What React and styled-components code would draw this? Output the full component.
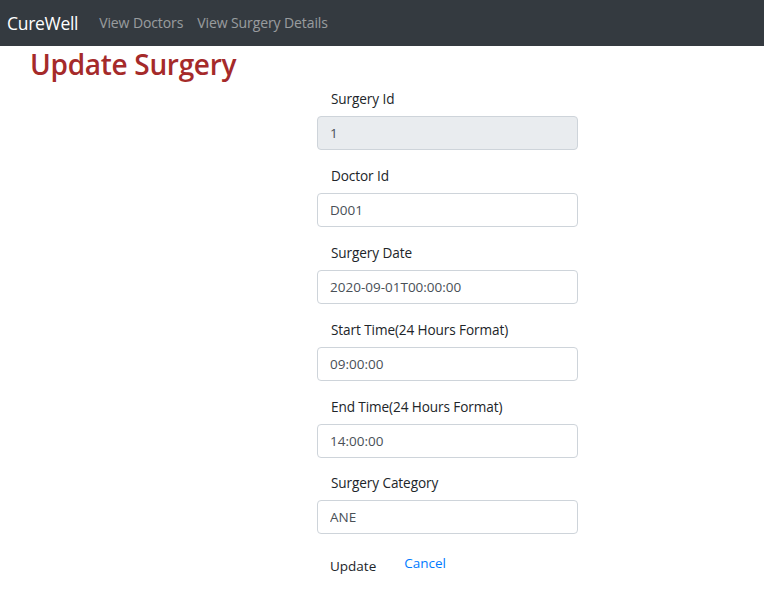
import React from "react";
import styled, { createGlobalStyle } from "styled-components";

const Global = createGlobalStyle`
  html, body { margin: 0; padding: 0; background: #fff; }
  body { font-family: "Open Sans", "Noto Sans", Arial, sans-serif; color: #212529; }
  * { box-sizing: border-box; }
`;

const Nav = styled.nav`
  height: 46px;
  background: #343a40;
  display: flex;
  align-items: center;
  padding: 0 7px 1px;
  gap: 21px;
`;

const Brand = styled.a`
  color: #fff;
  font-size: 17.5px;
  letter-spacing: -0.3px;
  text-decoration: none;
`;

const Links = styled.div`
  display: flex;
  gap: 14px;
`;

const NavLink = styled.a`
  color: rgba(255, 255, 255, 0.5);
  font-size: 14px;
  letter-spacing: -0.1px;
  text-decoration: none;
`;

const Title = styled.h1`
  margin: 0 0 0 30px;
  font-size: 28px;
  line-height: 37px;
  font-weight: 600;
  color: #a52a2a;
  letter-spacing: -0.3px;
`;

const Form = styled.form`
  margin-left: 317px;
  margin-top: 6px;
  width: 261px;
  display: flex;
  flex-direction: column;
`;

const Group = styled.div`
  display: flex;
  flex-direction: column;
  margin-bottom: ${(p) => (p.$last ? 0 : 15.9)}px;
`;

const Label = styled.label`
  padding-left: 14px;
  font-size: 13.6px;
  line-height: 20px;
  margin-bottom: 7px;
  letter-spacing: -0.1px;
`;

const Input = styled.input`
  height: 34px;
  width: 100%;
  border: 1px solid #ced4da;
  border-radius: 4px;
  padding: 0 12px;
  font-family: inherit;
  font-size: 13.5px;
  color: #495057;
  background: ${(p) => (p.readOnly ? "#e9ecef" : "#fff")};
  outline: none;
`;

const Actions = styled.div`
  display: flex;
  align-items: center;
  gap: 28px;
  padding-left: 13px;
  margin-top: 17px;
`;

const UpdateBtn = styled.button`
  border: none;
  background: none;
  padding: 0;
  font-family: inherit;
  font-size: 13.5px;
  color: #212529;
  margin-top: 6px;
`;

const CancelLink = styled.a`
  color: #007bff;
  font-size: 13.5px;
  text-decoration: none;
`;

const fields = [
  { label: "Surgery Id", value: "1", readOnly: true },
  { label: "Doctor Id", value: "D001" },
  { label: "Surgery Date", value: "2020-09-01T00:00:00" },
  { label: "Start Time(24 Hours Format)", value: "09:00:00" },
  { label: "End Time(24 Hours Format)", value: "14:00:00" },
  { label: "Surgery Category", value: "ANE" },
];

export default function App() {
  return (
    <>
      <Global />
      <Nav>
        <Brand href="#">CureWell</Brand>
        <Links>
          <NavLink href="#">View Doctors</NavLink>
          <NavLink href="#">View Surgery Details</NavLink>
        </Links>
      </Nav>
      <Title>Update Surgery</Title>
      <Form onSubmit={(e) => e.preventDefault()}>
        {fields.map((f, i) => (
          <Group key={f.label} $last={i === fields.length - 1}>
            <Label>{f.label}</Label>
            <Input defaultValue={f.value} readOnly={f.readOnly} />
          </Group>
        ))}
        <Actions>
          <UpdateBtn type="submit">Update</UpdateBtn>
          <CancelLink href="#">Cancel</CancelLink>
        </Actions>
      </Form>
    </>
  );
}
